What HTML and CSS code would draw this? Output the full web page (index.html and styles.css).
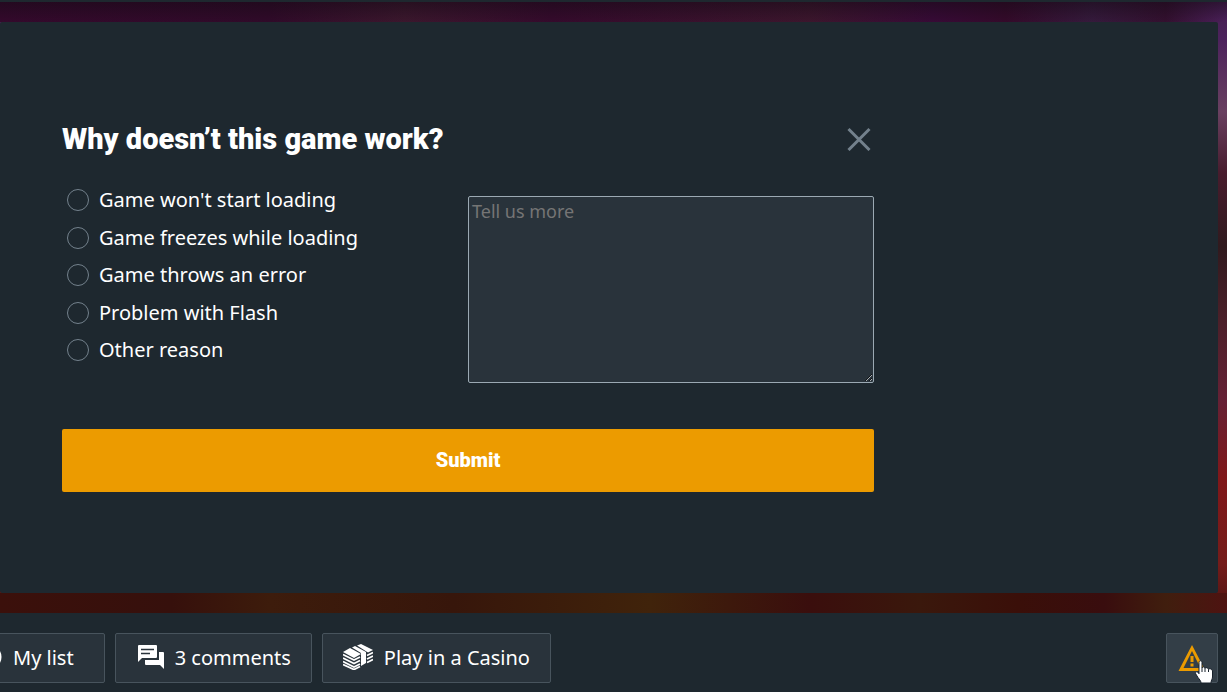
FILE: index.html
```html
<!DOCTYPE html>
<html lang="en">
<head>
    <meta charset="UTF-8">
    <meta name="viewport" content="width=device-width, initial-scale=1.0">
    <title>Report a game problem</title>
    <link rel="stylesheet" href="styles.css">
</head>
<body>
    <!-- Game area -->
    <main class="stage">
        <div class="panel">
            <form class="report-form">
                <div class="report-header">
                    <h2 class="report-title">Why doesn’t this game work?</h2>
                    <button type="button" class="close-btn" aria-label="Close">
                        <svg width="24" height="24" viewBox="0 0 24 24" fill="none" stroke="#73818c" stroke-width="3">
                            <path d="M1.500 2 22.500 23M22.500 2 1.500 23"/>
                        </svg>
                    </button>
                </div>

                <div class="report-body">
                    <fieldset class="reasons" aria-label="Reason">
                        <label class="reason"><input type="radio" name="reason" value="start">Game won't start loading</label>
                        <label class="reason"><input type="radio" name="reason" value="freeze">Game freezes while loading</label>
                        <label class="reason"><input type="radio" name="reason" value="error">Game throws an error</label>
                        <label class="reason"><input type="radio" name="reason" value="flash">Problem with Flash</label>
                        <label class="reason"><input type="radio" name="reason" value="other">Other reason</label>
                    </fieldset>
                    <textarea class="details" placeholder="Tell us more" aria-label="Tell us more"></textarea>
                </div>

                <button type="submit" class="submit-btn">Submit</button>
            </form>
        </div>
    </main>

    <!-- Game toolbar -->
    <footer class="toolbar">
        <button type="button" class="tool-btn list-btn">
            <svg width="26" height="26" viewBox="0 0 26 26" fill="none" stroke="#fff" stroke-width="3">
                <circle cx="13" cy="13" r="11"/>
                <path d="M13 7v12M7 13h12"/>
            </svg>
            My list
        </button>
        <button type="button" class="tool-btn">
            <svg width="28" height="26" viewBox="-2 0 28 26">
                <path fill="#fff" d="M1 1h17q1 0 1 1v11q0 1-1 1H4l-4 4V2q0-1 1-1z"/>
                <path stroke="#29333b" stroke-width="1.500" d="M3 5.500h13M3 9.500h9"/>
                <path fill="#fff" d="M21 8h4q1 0 1 1v16l-4-4H8q-1 0-1-1v-4h14z"/>
            </svg>
            3 comments
        </button>
        <button type="button" class="tool-btn">
            <svg width="30" height="26" viewBox="0 0 30 26">
                <g fill="#fff">
                    <path d="M0 8 7 4l11 6-7 4z"/>
                    <path d="M9 3.500 12 2l11 6v11l-5 3V9z"/>
                    <path d="M14 1.500 18 0l12 6-5 2.500z"/>
                </g>
                <g fill="none" stroke="#fff" stroke-width="1.800">
                    <path d="M0 10.500 11 16l6-3M0 14l11 5.500 6-3M0 17.500 11 23l6-3M0 20.500 11 25.500l6-3"/>
                    <path d="M24 11.500l6-3M24 15l6-3M24 18.500l6-3"/>
                </g>
            </svg>
            Play in a Casino
        </button>
        <button type="button" class="tool-btn report-btn" aria-label="Report a problem">
            <svg width="28" height="28" viewBox="0 0 28 28" fill="#ec9b00">
                <path fill-rule="evenodd" d="M14 1 27.500 27H.5zM14 7 5.500 24h17z"/>
                <path d="M12.500 12h3v6h-3zM12.500 19.500h3v3h-3z"/>
            </svg>
            <svg class="pointer" width="18" height="24" viewBox="0 0 18 24">
                <path fill="#fff" stroke="#17202a" d="M4 12V2.500C4 .2 7 .2 7 2.500V8c.3-1.500 3-1.500 3 .5 .5-1.500 3.500-1 3.500 1 .8-1.300 4-.8 4 1.500v6c0 2-1.500 3-1.500 6H6c0-2-1.500-3.500-3-5.500L.8 14C-.2 12 2 11 3 12.500l1 1.200z"/>
                <path fill="none" stroke="#17202a" d="M7 8v4M10 8.500V12M13.500 9.500V12"/>
            </svg>
        </button>
    </footer>
</body>
</html>
```
FILE: styles.css
```css
* {
    box-sizing: border-box;
}

body {
    margin: 0;
    min-height: 100vh;
    display: flex;
    flex-direction: column;
    overflow-x: hidden;
    background-color: #1e282f;
    border-top: 2px solid #1e282f;
    color: white;
    font-family: "Noto Sans", sans-serif;
    font-size: 20px;
}

button,
textarea {
    font: inherit;
}

.stage {
    flex: 1;
    display: flex;
    padding: 20px 9px 20px 0;
    background:
        linear-gradient(rgba(20, 10, 20, 0.5), transparent) top / 100% 20px no-repeat,
        linear-gradient(90deg, #34092c, #300a29 22%, #3b172d 33%, #350a2c 45%, #3c162d 66%, #370a36 76%, #340a2a 82%, #351a3c 89%, #33102f 95%, #4b205a) top / 100% 20px no-repeat,
        linear-gradient(90deg, #3b100b, #36100c 14%, #3d1c0c 22%, #37160b 37%, #40230b 53%, #3a0e0d 66%, #3a180c 75%, #3a0f09 83%, #390d0e 90%, #401e0e 95%, #4e1311) bottom / 100% 20px no-repeat,
        linear-gradient(#43204e, #4c225c 6%, #694060 18%, #481c2d 28%, #301a1e 40%, #4b2029 52%, #652135 65%, #801719 78%, #741c1a 92%, #4e1311);
}

.panel {
    flex: 1;
    padding: 97px 62px;
    background-color: #1e282f;
    border-radius: 2px;
}

.report-form {
    max-width: 812px;
}

.report-header {
    display: flex;
    justify-content: space-between;
    align-items: center;
    margin-bottom: 26px;
}

.report-title {
    margin: 0;
    font-family: Roboto, "Noto Sans", sans-serif;
    font-size: 29px;
    font-weight: 900;
    line-height: 40px;
}

.close-btn {
    display: flex;
    padding: 3px;
    border: none;
    background: none;
    cursor: pointer;
}

.report-body {
    display: grid;
    grid-template-columns: 1fr 1fr;
}

.reasons {
    display: flex;
    flex-direction: column;
    justify-content: space-between;
    margin: 0;
    padding: 0 0 18px 5px;
    border: none;
}

.reason {
    display: flex;
    align-items: center;
    gap: 10px;
    line-height: 30px;
}

.reason input {
    appearance: none;
    width: 22px;
    height: 22px;
    margin: 0;
    border: 1px solid #73818c;
    border-radius: 50%;
}

.reason input:checked {
    background-color: #ec9b00;
}

.details {
    height: 187px;
    margin-top: 11px;
    padding: 2px 3px;
    border: 1px solid #9ba9b3;
    border-radius: 2px;
    background-color: #29333b;
    color: white;
    font-size: 18px;
    resize: both;
}

.details::placeholder {
    color: #757575;
}

.submit-btn {
    width: 100%;
    margin-top: 46px;
    padding: 16px;
    border: none;
    border-radius: 2px;
    background-color: #ec9b00;
    color: white;
    font-family: Roboto, "Noto Sans", sans-serif;
    font-weight: 900;
    line-height: 31px;
    cursor: pointer;
}

.toolbar {
    display: flex;
    gap: 10px;
    padding: 20px 9px 9px 0;
}

.tool-btn {
    display: flex;
    align-items: center;
    gap: 11px;
    height: 50px;
    padding: 0 20px 2px;
    border: 1px solid #48545d;
    border-radius: 2px;
    background-color: #29333b;
    color: white;
    white-space: nowrap;
    cursor: pointer;
}

.list-btn {
    margin-left: -55px;
    padding: 0 30px 2px;
}

.report-btn {
    position: relative;
    margin-left: auto;
    padding: 0 11px;
    background-color: #333e47;
}

.pointer {
    position: absolute;
    left: 28px;
    top: 26px;
}
```
